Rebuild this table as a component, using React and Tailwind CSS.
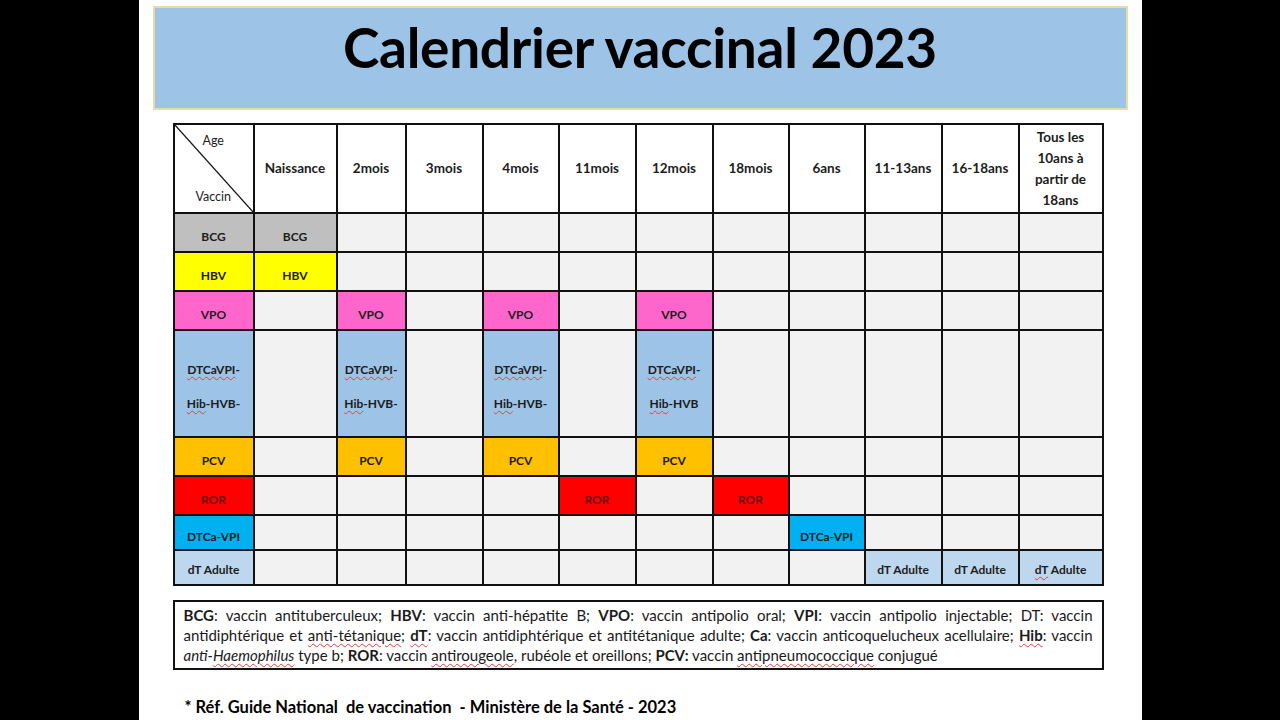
import React from 'react';

const cols = [80, 83, 69, 77, 76, 77, 77, 76, 76, 77, 77, 84];
const ages = ['Naissance', '2mois', '3mois', '4mois', '11mois', '12mois', '18mois', '6ans', '11-13ans', '16-18ans'];

const Wavy = ({ children }) => (
  <span className="underline decoration-wavy decoration-[#e04040] decoration-1 underline-offset-2">{children}</span>
);

const dtcaLong = (last) => (
  <div className="flex flex-col gap-[20px] leading-[14px]">
    <span><Wavy>DTCaVPI</Wavy>-</span>
    <span><Wavy>Hib</Wavy>-HVB{last ? '' : '-'}</span>
  </div>
);

// each row: label, colour of the first cell, height, map of column index -> [content, bg]
const rows = [
  { label: 'BCG', bg: 'bg-[#bfbfbf]', h: 'h-[39px]', cells: { 0: ['BCG', 'bg-[#bfbfbf]'] } },
  { label: 'HBV', bg: 'bg-[#ffff00]', h: 'h-[39px]', cells: { 0: ['HBV', 'bg-[#ffff00]'] } },
  {
    label: 'VPO', bg: 'bg-[#ff66cc]', h: 'h-[39px]',
    cells: { 1: ['VPO', 'bg-[#ff66cc]'], 3: ['VPO', 'bg-[#ff66cc]'], 5: ['VPO', 'bg-[#ff66cc]'] },
  },
  {
    label: dtcaLong(false), bg: 'bg-[#9dc3e6]', h: 'h-[107px]', tall: true,
    cells: { 1: [dtcaLong(false), 'bg-[#9dc3e6]'], 3: [dtcaLong(false), 'bg-[#9dc3e6]'], 5: [dtcaLong(true), 'bg-[#9dc3e6]'] },
  },
  {
    label: 'PCV', bg: 'bg-[#ffc000]', h: 'h-[39px]',
    cells: { 1: ['PCV', 'bg-[#ffc000]'], 3: ['PCV', 'bg-[#ffc000]'], 5: ['PCV', 'bg-[#ffc000]'] },
  },
  {
    label: 'ROR', bg: 'bg-[#ff0000]', h: 'h-[39px]', red: true,
    cells: { 4: ['ROR', 'bg-[#ff0000]'], 6: ['ROR', 'bg-[#ff0000]'] },
  },
  { label: 'DTCa-VPI', bg: 'bg-[#00b0f0]', h: 'h-[35px]', cells: { 7: ['DTCa-VPI', 'bg-[#00b0f0]'] } },
  {
    label: 'dT Adulte', bg: 'bg-[#bdd7ee]', h: 'h-[35px]', bottom: true,
    cells: { 8: ['dT Adulte', 'bg-[#bdd7ee]'], 9: ['dT Adulte', 'bg-[#bdd7ee]'], 10: [<><Wavy>dT</Wavy> Adulte</>, 'bg-[#bdd7ee]'] },
  },
];

const cellPos = (r) => {
  if (r.tall) return 'align-top pt-[32px]';
  if (r.bottom) return 'align-bottom pb-[5px]';
  return 'pt-[8px]';
};

export default function App() {
  return (
    <div className="w-[1280px] h-[720px] bg-black flex justify-center overflow-hidden" style={{ fontFamily: 'Lato, "Open Sans", sans-serif' }}>
      <div className="w-[1003px] h-full bg-white pt-[6px] pl-[14px]">
        {/* Title */}
        <div className="w-[975px] h-[104px] bg-[#9dc3e6] border-2 border-[#e9dca2] flex items-center justify-center">
          <h1 className="text-[55px] font-bold text-black leading-none -mt-[22px] tracking-[-0.3px]">Calendrier vaccinal 2023</h1>
        </div>

        {/* Table */}
        <table className="mt-[13px] ml-[20px] table-fixed border-collapse w-[929px] text-[#1c1c1c]">
          <colgroup>
            {cols.map((w, i) => (
              <col key={i} style={{ width: w }} />
            ))}
          </colgroup>
          <thead>
            <tr className="h-[89px] bg-white text-[13.5px] font-bold">
              <th className="relative border-2 border-[#111] p-0 font-normal">
                <svg className="absolute inset-0 w-full h-full" viewBox="0 0 100 100" preserveAspectRatio="none">
                  <line x1="0" y1="0" x2="100" y2="100" stroke="#111" strokeWidth="1.2" vectorEffect="non-scaling-stroke" />
                </svg>
                <div className="relative h-[87px] text-[12.5px] text-left">
                  <span className="absolute left-[28px] top-[7px]">Age</span>
                  <span className="absolute left-[21px] top-[63px]">Vaccin</span>
                </div>
              </th>
              {ages.map((a) => (
                <th key={a} className="border-2 border-[#111] font-bold">{a}</th>
              ))}
              <th className="border-2 border-[#111] font-bold leading-[21px] pt-[1px]">
                Tous les<br />10ans à<br />partir de<br />18ans
              </th>
            </tr>
          </thead>
          <tbody>
            {rows.map((r, ri) => (
              <tr key={ri} className={`${r.h} text-[12px] font-bold`}>
                <td className={`border-2 border-[#111] text-center ${r.bg} ${r.red ? 'text-[#6e0a0a]' : ''} ${cellPos(r)}`}>
                  {r.label}
                </td>
                {Array.from({ length: 11 }).map((_, ci) => {
                  const c = r.cells[ci];
                  return (
                    <td
                      key={ci}
                      className={`border-2 border-[#111] text-center ${c ? c[1] : 'bg-[#f2f2f2]'} ${r.red ? 'text-[#6e0a0a]' : ''} ${cellPos(r)}`}
                    >
                      {c ? c[0] : ''}
                    </td>
                  );
                })}
              </tr>
            ))}
          </tbody>
        </table>

        {/* Legend */}
        <div className="mt-[14px] ml-[20px] w-[931px] h-[70px] border-2 border-[#111] px-[9px] pt-[3px] text-[15px] leading-[20px] text-[#1a1a1a]">
          <p className="text-justify [text-align-last:justify]">
            <b>BCG</b>: vaccin antituberculeux; <b>HBV</b>: vaccin anti-hépatite B; <b>VPO</b>: vaccin antipolio oral; <b>VPI</b>: vaccin antipolio injectable; DT: vaccin
          </p>
          <p className="text-justify [text-align-last:justify]">
            antidiphtérique et <Wavy>anti-tétanique</Wavy>; <b><Wavy>dT</Wavy></b>: vaccin antidiphtérique et antitétanique adulte; <b>Ca</b>: vaccin anticoquelucheux acellulaire; <b><Wavy>Hib</Wavy></b>: vaccin
          </p>
          <p>
            <i>anti-<Wavy>Haemophilus</Wavy></i> type b; <b>ROR</b>: vaccin <Wavy>antirougeole</Wavy>, rubéole et oreillons; <b>PCV:</b> vaccin <Wavy>antipneumococcique</Wavy> conjugué
          </p>
        </div>

        {/* Footer */}
        <p className="mt-[25px] ml-[32px] text-[16.5px] font-bold text-black whitespace-pre">
          {'* Réf. Guide National  de vaccination  - Ministère de la Santé - 2023'}
        </p>
      </div>
    </div>
  );
}
